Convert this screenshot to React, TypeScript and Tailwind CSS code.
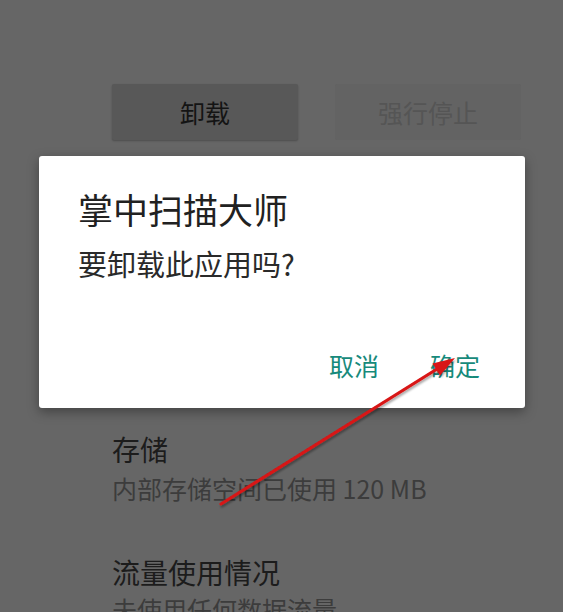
import React from "react";

export default function App() {
  const font = { fontFamily: '"Noto Sans CJK SC", "Noto Sans", sans-serif' };
  return (
    <div className="relative w-[563px] h-[612px] overflow-hidden bg-[#666666]" style={font}>
      <div className="flex flex-col pt-[84px] pl-[112px]">
        <div className="flex gap-[37px]">
          <div className="w-[186px] h-[56px] bg-[#585858] rounded-[2px] shadow-[0_1px_2px_rgba(0,0,0,0.25)] flex items-center justify-center text-[25px] leading-none text-[#141414]">
            卸载
          </div>
          <div className="w-[186px] h-[56px] bg-[#636363] rounded-[2px] flex items-center justify-center text-[25px] leading-none text-[#555555]">
            强行停止
          </div>
        </div>
        <div className="mt-[293px] text-[28px] leading-[32px] text-[#1c1c1c]">存储</div>
        <div className="mt-[8px] text-[25px] leading-[30px] text-[#3c3c3c]">内部存储空间已使用 120 MB</div>
        <div className="mt-[53px] text-[28px] leading-[32px] text-[#1c1c1c]">流量使用情况</div>
        <div className="mt-[6px] text-[25px] leading-[30px] text-[#3c3c3c] whitespace-nowrap">未使用任何数据流量</div>
      </div>

      <div className="absolute left-[39px] top-[156px] w-[486px] h-[252px] bg-white rounded-[3px] shadow-[0_4px_12px_rgba(0,0,0,0.35)] flex flex-col pl-[39px] pr-[45px] pt-[32px]">
        <div className="text-[35px] leading-[42px] text-[#212121]">掌中扫描大师</div>
        <div className="mt-[16px] text-[29px] leading-[35px] text-[#2a2a2a]">要卸载此应用吗?</div>
        <div className="mt-auto mb-[28px] flex justify-end gap-[51px] text-[25px] leading-[30px] text-[#178a7b]">
          <span>取消</span>
          <span>确定</span>
        </div>
      </div>

      <svg className="absolute left-0 top-0" width="563" height="612" viewBox="0 0 563 612">
        <defs>
          <filter id="sh" x="-10%" y="-10%" width="120%" height="120%">
            <feDropShadow dx="1" dy="2" stdDeviation="1.2" floodColor="#000" floodOpacity="0.35" />
          </filter>
        </defs>
        <g filter="url(#sh)">
          <line x1="221" y1="504" x2="437" y2="369" stroke="#d81414" strokeWidth="3.2" strokeLinecap="round" />
          <polygon points="455,358 440,375.5 432.5,363.5" fill="#d81414" />
        </g>
      </svg>
    </div>
  );
}
